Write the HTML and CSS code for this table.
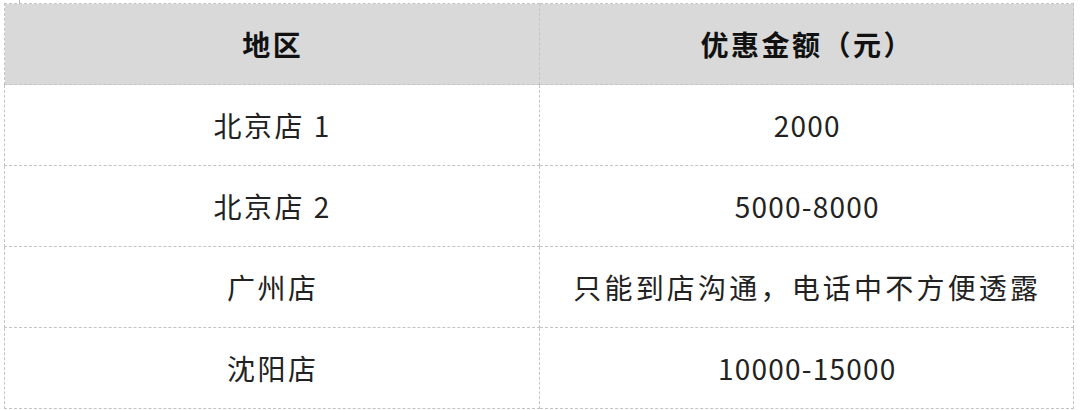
FILE: index.html
```html
<!DOCTYPE html>
<html lang="zh">
<head>
<meta charset="utf-8">
<link rel="stylesheet" href="styles.css">
</head>
<body>
<span class="tick"></span>
<table class="price-table">
  <thead>
    <tr><th>地区</th><th>优惠金额（元）</th></tr>
  </thead>
  <tbody>
    <tr><td>北京店 1</td><td class="num">2000</td></tr>
    <tr><td>北京店 2</td><td class="num">5000-8000</td></tr>
    <tr><td>广州店</td><td class="note">只能到店沟通，电话中不方便透露</td></tr>
    <tr><td>沈阳店</td><td class="num">10000-15000</td></tr>
  </tbody>
</table>
</body>
</html>
```
FILE: styles.css
```css
html, body {
  margin: 0;
  padding: 0;
  background: #fff;
}
body {
  padding: 3px 0 0 4px;
  position: relative;
  font-family: "Noto Sans CJK SC", "Noto Sans", sans-serif;
  color: #222;
}
.tick {
  position: absolute;
  left: 19px;
  top: 0;
  width: 1px;
  height: 4px;
  background: #bbb;
}
.price-table {
  width: 1070px;
  border-collapse: collapse;
  table-layout: fixed;
  font-size: 28px;
  letter-spacing: 2.5px;
}
.price-table th,
.price-table td {
  border: 1px dashed #c4c4c4;
  text-align: center;
  vertical-align: middle;
  padding: 0 0 0 2px;
  height: 80px;
  line-height: 1;
}
.price-table th {
  background: #d9d9d9;
  font-weight: 700;
  color: #111;
}
.price-table td.num {
  letter-spacing: 1.2px;
}
.price-table td.note {
  letter-spacing: 3.2px;
}
```
